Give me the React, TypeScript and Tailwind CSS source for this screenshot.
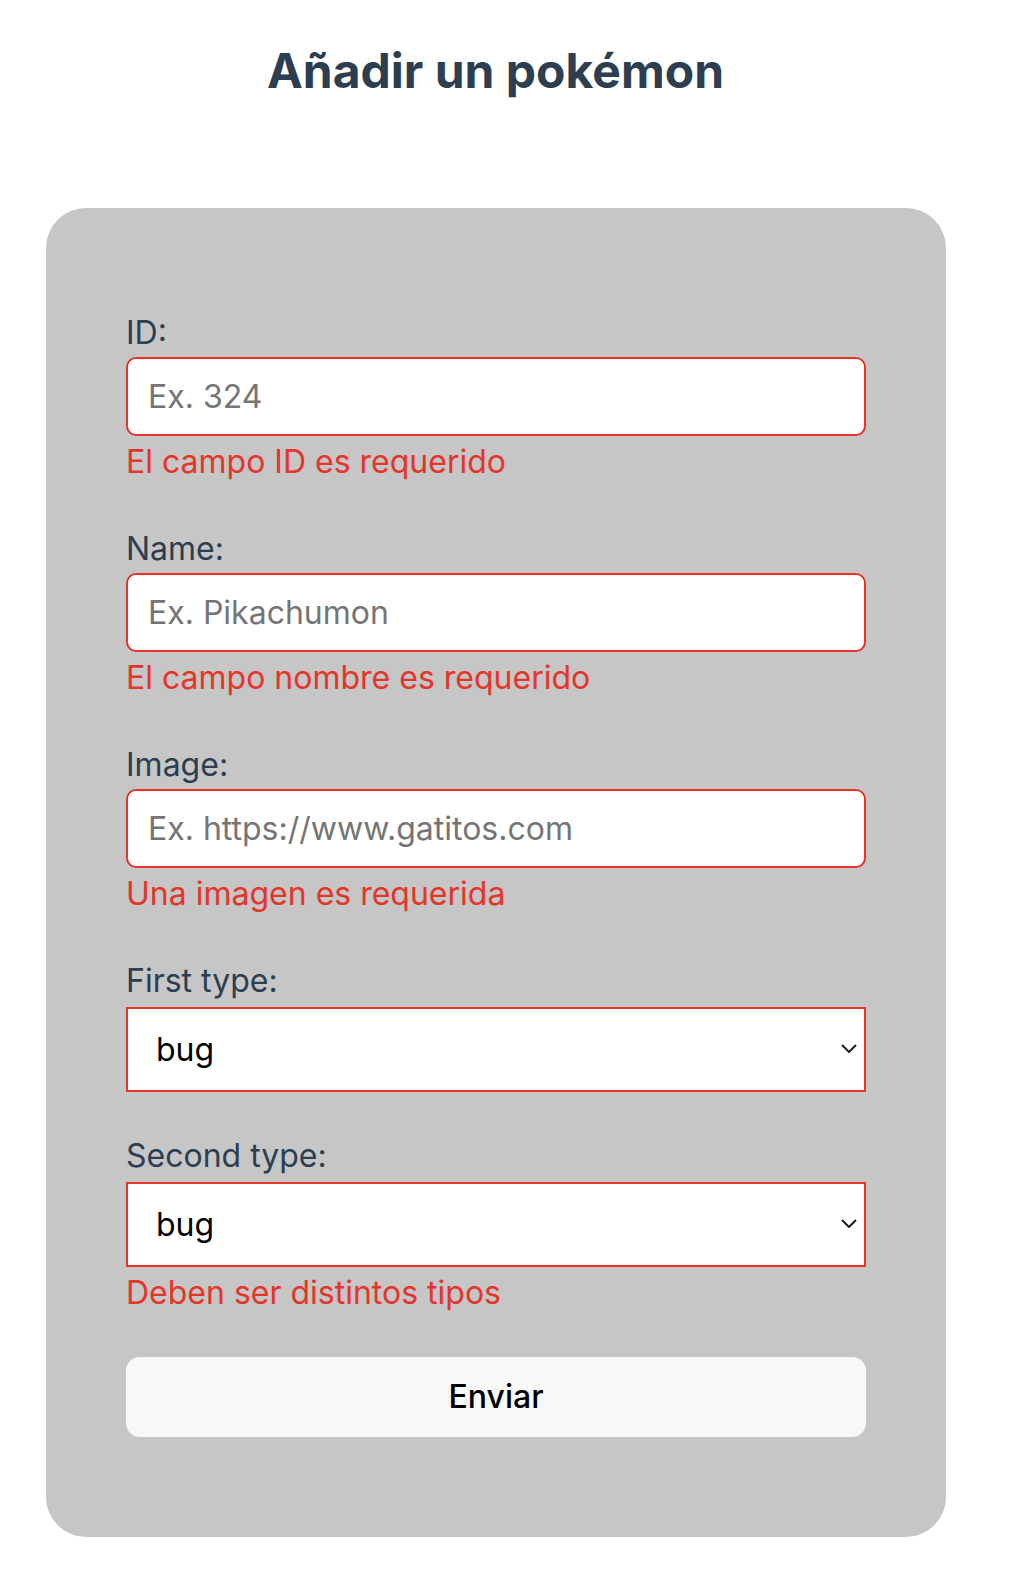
import React from 'react';

const RED = 'text-[#e5352b]';

type InputField = { label: string; placeholder: string; error: string };

const inputs: InputField[] = [
    { label: 'ID:', placeholder: 'Ex. 324', error: 'El campo ID es requerido' },
    { label: 'Name:', placeholder: 'Ex. Pikachumon', error: 'El campo nombre es requerido' },
    { label: 'Image:', placeholder: 'Ex. https://www.gatitos.com', error: 'Una imagen es requerida' },
];

const types = ['bug', 'dark', 'dragon', 'electric', 'fairy', 'fighting', 'fire', 'flying', 'ghost', 'grass', 'ground', 'ice', 'normal', 'poison', 'psychic', 'rock', 'steel', 'water'];

const TypeSelect = ({ id }: { id: string }) => (
    <div className="relative mt-[7px]">
        <select
            id={id}
            defaultValue="bug"
            className="block h-[85px] w-full appearance-none rounded-none border-2 border-[#e5352b] bg-white pl-[28px] text-[32px] text-black outline-none"
        >
            {types.map((t) => (
                <option key={t} value={t}>{t}</option>
            ))}
        </select>
        {/* flecha del select */}
        <svg className="pointer-events-none absolute right-[9px] top-[37px]" width="16" height="9" viewBox="0 0 16 9" fill="none">
            <path d="M1 1l7 7 7-7" stroke="#1c1c1c" strokeWidth="2" />
        </svg>
    </div>
);

export default function App() {
    return (
        <div className="min-h-[1592px] bg-white font-['Inter','Noto_Sans',sans-serif] text-[#2c3e50]">
            <div className="w-[991px] pt-[42px]">
                <h1 className="text-center text-[48px] font-bold leading-[58px]">Añadir un pokémon</h1>
            </div>

            <form className="ml-[46px] mt-[108px] w-[900px] rounded-[40px] bg-[#c6c6c6] px-[80px] pt-[106px] pb-[100px]">
                {inputs.map((f, i) => (
                    <div key={f.label} className={i === 0 ? '' : 'mt-[49px]'}>
                        <label className="block text-[32px] leading-[38px]">{f.label}</label>
                        <input
                            type="text"
                            placeholder={f.placeholder}
                            className="mt-[5px] block h-[79px] w-full rounded-[10px] border-2 border-[#e5352b] bg-white pl-[20px] text-[32px] text-black outline-none placeholder:text-[#757575]"
                        />
                        <p className={`mt-[7px] text-[32px] leading-[38px] ${RED}`}>{f.error}</p>
                    </div>
                ))}

                <div className="mt-[49px]">
                    <label htmlFor="type1" className="block text-[32px] leading-[38px]">First type:</label>
                    <TypeSelect id="type1" />
                </div>

                <div className="mt-[45px]">
                    <label htmlFor="type2" className="block text-[32px] leading-[38px]">Second type:</label>
                    <TypeSelect id="type2" />
                    <p className={`mt-[7px] text-[32px] leading-[38px] ${RED}`}>Deben ser distintos tipos</p>
                </div>

                <button
                    type="button"
                    className="mt-[45px] block h-[80px] w-full rounded-[14px] bg-[#f8f8f8] text-[32px] font-medium text-black"
                >
                    Enviar
                </button>
            </form>
        </div>
    );
}
